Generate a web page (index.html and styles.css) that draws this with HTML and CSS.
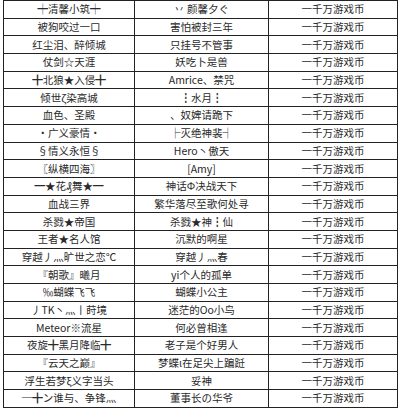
FILE: index.html
```html
<!DOCTYPE html>
<html>
<head>
<meta charset="utf-8">
<link rel="stylesheet" href="styles.css">
</head>
<body>
<table class="list">
<tr><td>┿清馨小筑┿</td><td>丷 颜馨夕ぐ</td><td>一千万游戏币</td></tr>
<tr><td>被狗咬过一口</td><td>害怕被封三年</td><td>一千万游戏币</td></tr>
<tr><td>红尘泪、醉倾城</td><td>只挂号不管事</td><td>一千万游戏币</td></tr>
<tr><td>仗剑☆天涯</td><td>妖吃卜是兽</td><td>一千万游戏币</td></tr>
<tr><td>╋北狼★入侵╋</td><td>Amrice、禁咒</td><td>一千万游戏币</td></tr>
<tr><td>倾世ζ染高城</td><td>┇水月┇</td><td>一千万游戏币</td></tr>
<tr><td>血色、圣殿</td><td>、奴婢请跪下</td><td>一千万游戏币</td></tr>
<tr><td>•广义豪情•</td><td>├灭绝神裴┤</td><td>一千万游戏币</td></tr>
<tr><td>§情义永恒§</td><td>Hero丶傲天</td><td>一千万游戏币</td></tr>
<tr><td>〖纵横四海〗</td><td>[Amy]</td><td>一千万游戏币</td></tr>
<tr><td>━★花₰舞★━</td><td>神话Φ决战天下</td><td>一千万游戏币</td></tr>
<tr><td>血战三界</td><td>繁华落尽至歌何处寻</td><td>一千万游戏币</td></tr>
<tr><td>杀戮★帝国</td><td>杀戮★神┇仙</td><td>一千万游戏币</td></tr>
<tr><td>王者★名人馆</td><td>沉默的啊星</td><td>一千万游戏币</td></tr>
<tr><td>穿越丿灬旷世之恋℃</td><td>穿越丿灬春</td><td>一千万游戏币</td></tr>
<tr><td>『朝歌』曦月</td><td>yi个人的孤单</td><td>一千万游戏币</td></tr>
<tr><td>‰蝴蝶飞飞</td><td>蝴蝶小公主</td><td>一千万游戏币</td></tr>
<tr><td>丿TK丶灬丨莳境</td><td>迷茫的Oo小鸟</td><td>一千万游戏币</td></tr>
<tr><td>Meteor※流星</td><td>何必曾相逢</td><td>一千万游戏币</td></tr>
<tr><td>夜旋╋黑月降临╋</td><td>老子是个好男人</td><td>一千万游戏币</td></tr>
<tr><td>『云天之巅』</td><td>梦蝶ι在足尖上蹁跹</td><td>一千万游戏币</td></tr>
<tr><td>浮生若梦ξ义字当头</td><td>妥神</td><td>一千万游戏币</td></tr>
<tr><td>─╋ン谁与、争锋灬</td><td>董事长の华爷</td><td>一千万游戏币</td></tr>
</table>
</body>
</html>
```
FILE: styles.css
```css
html, body {
  margin: 0;
  padding: 0;
  background: #ffffff;
}
.list {
  margin: 0 0 0 3px;
  width: 395px;
  border-collapse: collapse;
  table-layout: fixed;
  font-family: "Noto Sans CJK SC", "Noto Sans", sans-serif;
  font-size: 10.5px;
  color: #2a2a2a;
}
.list tr {
  height: 17.7px;
}
.list td {
  border: 1px solid #222222;
  padding: 0;
  text-align: center;
  vertical-align: middle;
  line-height: 12px;
  white-space: nowrap;
  overflow: hidden;
}
.list td:nth-child(1) { width: 130px; }
.list td:nth-child(2) { width: 133px; }
```
